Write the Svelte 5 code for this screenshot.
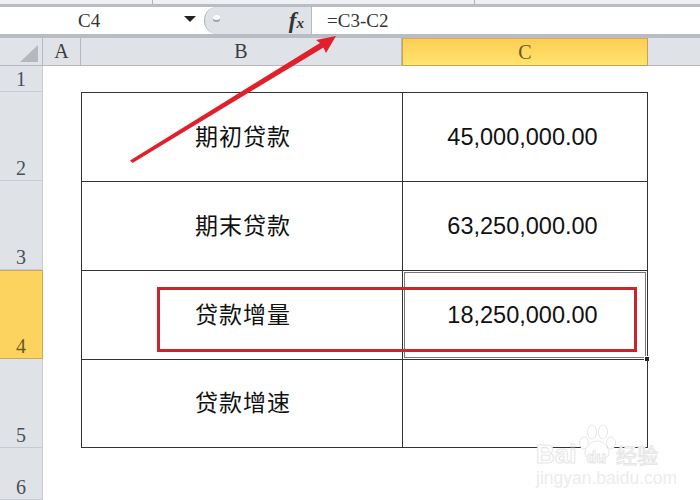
<script>
	const rows = [
		{ num: 2, label: '期初贷款', value: '45,000,000.00' },
		{ num: 3, label: '期末贷款', value: '63,250,000.00' },
		{ num: 4, label: '贷款增量', value: '18,250,000.00' },
		{ num: 5, label: '贷款增速', value: '' }
	];
</script>

<div class="window">
	<div class="ribbon-edge">
		<span class="tick one"></span>
		<span class="tick two"></span>
	</div>

	<div class="formula-bar">
		<div class="name-box">
			<span class="cell-name">C4</span>
			<span class="caret"></span>
		</div>
		<div class="fx-pill">
			<span class="knob"></span>
			<span class="fx">f<small>x</small></span>
		</div>
		<div class="formula">=C3-C2</div>
	</div>

	<div class="sheet">
		<div class="corner"><span class="corner-mark"></span></div>
		<div class="col">A</div>
		<div class="col">B</div>
		<div class="col active">C</div>
		<div class="col last"></div>

		<div class="row-head" style="grid-row: 2">1</div>
		<div class="row-head" style="grid-row: 3">2</div>
		<div class="row-head" style="grid-row: 4">3</div>
		<div class="row-head active" style="grid-row: 5">4</div>
		<div class="row-head" style="grid-row: 6">5</div>
		<div class="row-head" style="grid-row: 7">6</div>

		<div class="table">
			{#each rows as row}
				<div class="cell label"><span>{row.label}</span></div>
				<div class="cell value" class:selected={row.num === 4}>
					{row.value}
					{#if row.num === 4}<span class="handle"></span>{/if}
				</div>
			{/each}
		</div>
	</div>

	<div class="red-box"></div>

	<svg class="arrow" width="700" height="500" viewBox="0 0 700 500">
		<polygon points="130,160.5 320,43 316,40 336,36 326,53 323.5,47.5 132.5,163" fill="#e0202a" />
	</svg>

	<div class="watermark">
		<svg class="paw" width="38" height="36" viewBox="0 0 38 36">
			<g fill="#fff" stroke="#e6e6e6" stroke-width="1">
				<ellipse cx="6" cy="19" rx="4.5" ry="6" />
				<ellipse cx="14" cy="8" rx="4.5" ry="7" />
				<ellipse cx="25" cy="8" rx="4.5" ry="7" />
				<ellipse cx="33" cy="19" rx="4.5" ry="6" />
				<path d="M19 17c-6 0-12 6-12 12 0 5 6 6 12 5 6 1 12 0 12-5 0-6-6-12-12-12z" />
			</g>
		</svg>
		<div class="brand"><span>Bai</span><span class="du">du</span><span class="jy">经验</span></div>
		<div class="site">jingyan.baidu.com</div>
	</div>
</div>

<style>
	:global(body) {
		margin: 0;
		background: #fff;
	}

	.window {
		position: relative;
		width: 700px;
		height: 500px;
		overflow: hidden;
		background: #fff;
		font-family: 'Liberation Serif', serif;
		color: #3c3c3c;
	}

	.ribbon-edge {
		position: relative;
		height: 4px;
		background: #eef0f3;
		border-bottom: 3px solid #b8bcc4;
	}

	.tick {
		position: absolute;
		top: 0;
		width: 1px;
		height: 4px;
		background: #b0b4ba;
	}
	.tick.one { left: 152px; }
	.tick.two { left: 474px; }

	.formula-bar {
		display: flex;
		height: 27px;
		background: #fff;
		border-bottom: 4px solid #b9bcc4;
	}

	.name-box {
		display: flex;
		align-items: center;
		width: 204px;
		flex: none;
	}

	.cell-name {
		margin-left: 78px;
		width: 22px;
		font-size: 19px;
		color: #333;
	}

	.caret {
		margin-left: 84px;
		margin-top: -3px;
		border-left: 6px solid transparent;
		border-right: 6px solid transparent;
		border-top: 6px solid #222;
	}

	.fx-pill {
		position: relative;
		display: flex;
		align-items: center;
		justify-content: flex-end;
		width: 108px;
		flex: none;
		box-sizing: border-box;
		padding-right: 7px;
		background: #dfe2e7;
		border-radius: 13px 0 0 13px;
		border-left: 1px solid #aeb2b8;
		border-right: 1px solid #b6b9be;
	}

	.knob {
		position: absolute;
		left: 8px;
		top: 8px;
		width: 7px;
		height: 5px;
		border-radius: 50%;
		background: #fff;
		box-shadow: 0 2px 0 #9ca3ab;
	}

	.fx {
		font-style: italic;
		font-weight: 700;
		font-size: 23px;
		line-height: 1;
		color: #333;
	}
	.fx small {
		font-size: 15px;
	}

	.formula {
		flex: 1;
		padding-left: 15px;
		font-size: 19px;
		line-height: 27px;
		color: #333;
	}

	.sheet {
		display: grid;
		grid-template-columns: 43px 38px 321px 246px 52px;
		grid-template-rows: 28px 26px 89px 89px 89px 89px 52px;
	}

	.corner {
		position: relative;
		grid-row: 1;
		grid-column: 1;
		background: #e0e3e8;
		border-right: 1px solid #b5b9bf;
		border-bottom: 1px solid #b5b9bf;
	}

	.corner-mark {
		position: absolute;
		right: 4px;
		bottom: 3px;
		border-left: 18px solid transparent;
		border-bottom: 17px solid #b5b9bd;
	}

	.col {
		display: flex;
		align-items: center;
		justify-content: center;
		grid-row: 1;
		font-size: 20px;
		background: #dfe3e8;
		border-right: 1px solid #b5b9bf;
		border-bottom: 1px solid #b5b9bf;
	}

	.col.active {
		background: linear-gradient(#fdcd55, #ffe56f);
		border: 1px solid #c2a552;
		border-top-color: #d9b04c;
		color: #6b5a1f;
		box-sizing: border-box;
	}

	.col.last {
		border-right: none;
	}

	.row-head {
		display: flex;
		align-items: flex-end;
		justify-content: center;
		grid-column: 1;
		padding-bottom: 2px;
		font-size: 20px;
		line-height: 20px;
		background: #dfe3e8;
		border-right: 1px solid #c8ccd2;
		border-bottom: 1px solid #c8ccd2;
		box-sizing: border-box;
		color: #4a4f55;
	}

	.row-head.active {
		background: #fdd35f;
		border: 1px solid #c9ab55;
		border-left: none;
		color: #6b5a1f;
	}

	.table {
		display: grid;
		grid-column: 3 / 5;
		grid-row: 3 / 7;
		grid-template-columns: 321px 245px;
		grid-template-rows: 89px 89px 89px 88px;
		border-left: 1px solid #333;
		border-top: 1px solid #333;
	}

	.cell {
		position: relative;
		display: flex;
		align-items: center;
		justify-content: center;
		box-sizing: border-box;
		border-right: 1px solid #333;
		border-bottom: 1px solid #333;
		color: #111;
	}

	.label {
		padding: 0 0 5px 2px;
		font-family: 'Noto Sans CJK SC', sans-serif;
		font-size: 23px;
		letter-spacing: 1px;
	}

	.value {
		padding-right: 5px;
		font-family: 'Liberation Sans', sans-serif;
		font-size: 23.5px;
	}

	.selected {
		box-shadow: inset 0 0 0 1px #fff, inset 0 0 0 2px #777;
	}

	.handle {
		position: absolute;
		right: -3px;
		bottom: -3px;
		width: 4px;
		height: 4px;
		background: #222;
		border: 1px solid #fff;
	}

	.red-box {
		position: absolute;
		left: 157px;
		top: 287px;
		width: 474px;
		height: 59px;
		border: 3px solid #c8252f;
	}

	.arrow {
		position: absolute;
		left: 0;
		top: 0;
	}

	.watermark {
		position: absolute;
		left: 536px;
		top: 422px;
		width: 150px;
	}

	.paw {
		position: absolute;
		left: 42px;
		top: 2px;
	}

	.brand {
		position: absolute;
		left: 0;
		top: 19px;
		display: flex;
		align-items: baseline;
		font-family: 'Liberation Sans', sans-serif;
		font-size: 26px;
		line-height: 26px;
		font-weight: 700;
		color: #fff;
		-webkit-text-stroke: 1px #e6e6e6;
		white-space: nowrap;
	}

	.du {
		font-size: 16px;
		margin-left: 10px;
	}

	.jy {
		margin-left: 10px;
		font-family: 'Noto Sans CJK SC', sans-serif;
		font-size: 21px;
		font-weight: 400;
	}

	.site {
		position: absolute;
		left: 0;
		top: 46px;
		font-family: 'Liberation Sans', sans-serif;
		font-size: 17.5px;
		color: #ececec;
		white-space: nowrap;
	}
</style>
